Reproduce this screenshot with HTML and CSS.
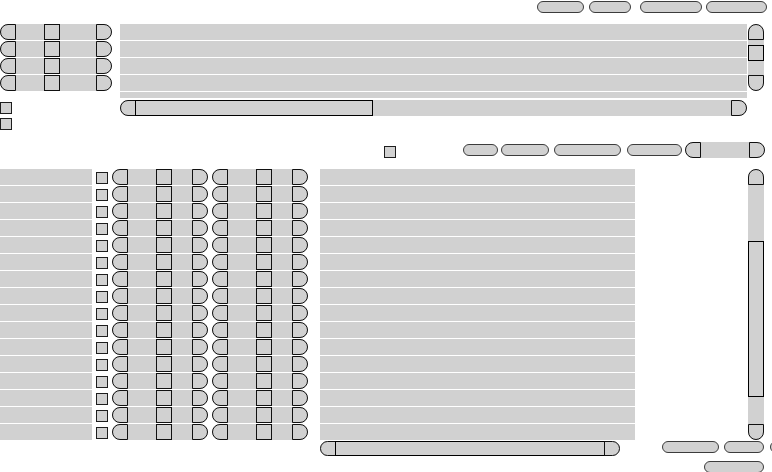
FILE: index.html
```html
<!DOCTYPE html>
<html lang="en">
<head>
  <meta charset="UTF-8" />
  <title>Widgets</title>
  <link rel="stylesheet" href="styles.css">
</head>
<body>

  <header class="topbar">
    <button class="pill w47"></button>
    <button class="pill w42 ml5"></button>
    <button class="pill w62 ml9"></button>
    <button class="pill w61 ml4"></button>
  </header>

  <section class="upper">
    <div class="side-left">
      <div class="spin"><span class="cap-l"></span><span class="sq"></span><span class="cap-r"></span></div>
      <div class="spin"><span class="cap-l"></span><span class="sq"></span><span class="cap-r"></span></div>
      <div class="spin"><span class="cap-l"></span><span class="sq"></span><span class="cap-r"></span></div>
      <div class="spin"><span class="cap-l"></span><span class="sq"></span><span class="cap-r"></span></div>
      <span class="check first"></span>
      <span class="check second"></span>
    </div>

    <div class="main">
      <div class="list wide">
        <div class="item"></div>
        <div class="item"></div>
        <div class="item"></div>
        <div class="item"></div>
        <div class="item"></div>
      </div>
      <div class="hscroll wide">
        <span class="arrow-l"></span>
        <span class="thumb-h big"></span>
        <span class="track"></span>
        <span class="arrow-r"></span>
      </div>
    </div>

    <div class="vscroll small">
      <span class="arrow-u"></span>
      <span class="thumb-v short"></span>
      <span class="arrow-d"></span>
    </div>
  </section>

  <div class="midbar">
    <span class="check mid"></span>
    <button class="pill w35 ml67 mt2"></button>
    <button class="pill w48 ml3 mt2"></button>
    <button class="pill w67 ml5 mt2"></button>
    <button class="pill w55 ml6 mt2"></button>
    <div class="hscroll slider">
      <span class="arrow-l"></span>
      <span class="track"></span>
      <span class="arrow-r"></span>
    </div>
  </div>

  <section class="lower">
    <div class="table">
      <div class="trow"><span class="cell"></span><span class="check"></span><span class="spin short"><span class="cap-l"></span><span class="sq"></span><span class="cap-r"></span></span><span class="spin short"><span class="cap-l"></span><span class="sq"></span><span class="cap-r"></span></span></div>
      <div class="trow"><span class="cell"></span><span class="check"></span><span class="spin short"><span class="cap-l"></span><span class="sq"></span><span class="cap-r"></span></span><span class="spin short"><span class="cap-l"></span><span class="sq"></span><span class="cap-r"></span></span></div>
      <div class="trow"><span class="cell"></span><span class="check"></span><span class="spin short"><span class="cap-l"></span><span class="sq"></span><span class="cap-r"></span></span><span class="spin short"><span class="cap-l"></span><span class="sq"></span><span class="cap-r"></span></span></div>
      <div class="trow"><span class="cell"></span><span class="check"></span><span class="spin short"><span class="cap-l"></span><span class="sq"></span><span class="cap-r"></span></span><span class="spin short"><span class="cap-l"></span><span class="sq"></span><span class="cap-r"></span></span></div>
      <div class="trow"><span class="cell"></span><span class="check"></span><span class="spin short"><span class="cap-l"></span><span class="sq"></span><span class="cap-r"></span></span><span class="spin short"><span class="cap-l"></span><span class="sq"></span><span class="cap-r"></span></span></div>
      <div class="trow"><span class="cell"></span><span class="check"></span><span class="spin short"><span class="cap-l"></span><span class="sq"></span><span class="cap-r"></span></span><span class="spin short"><span class="cap-l"></span><span class="sq"></span><span class="cap-r"></span></span></div>
      <div class="trow"><span class="cell"></span><span class="check"></span><span class="spin short"><span class="cap-l"></span><span class="sq"></span><span class="cap-r"></span></span><span class="spin short"><span class="cap-l"></span><span class="sq"></span><span class="cap-r"></span></span></div>
      <div class="trow"><span class="cell"></span><span class="check"></span><span class="spin short"><span class="cap-l"></span><span class="sq"></span><span class="cap-r"></span></span><span class="spin short"><span class="cap-l"></span><span class="sq"></span><span class="cap-r"></span></span></div>
      <div class="trow"><span class="cell"></span><span class="check"></span><span class="spin short"><span class="cap-l"></span><span class="sq"></span><span class="cap-r"></span></span><span class="spin short"><span class="cap-l"></span><span class="sq"></span><span class="cap-r"></span></span></div>
      <div class="trow"><span class="cell"></span><span class="check"></span><span class="spin short"><span class="cap-l"></span><span class="sq"></span><span class="cap-r"></span></span><span class="spin short"><span class="cap-l"></span><span class="sq"></span><span class="cap-r"></span></span></div>
      <div class="trow"><span class="cell"></span><span class="check"></span><span class="spin short"><span class="cap-l"></span><span class="sq"></span><span class="cap-r"></span></span><span class="spin short"><span class="cap-l"></span><span class="sq"></span><span class="cap-r"></span></span></div>
      <div class="trow"><span class="cell"></span><span class="check"></span><span class="spin short"><span class="cap-l"></span><span class="sq"></span><span class="cap-r"></span></span><span class="spin short"><span class="cap-l"></span><span class="sq"></span><span class="cap-r"></span></span></div>
      <div class="trow"><span class="cell"></span><span class="check"></span><span class="spin short"><span class="cap-l"></span><span class="sq"></span><span class="cap-r"></span></span><span class="spin short"><span class="cap-l"></span><span class="sq"></span><span class="cap-r"></span></span></div>
      <div class="trow"><span class="cell"></span><span class="check"></span><span class="spin short"><span class="cap-l"></span><span class="sq"></span><span class="cap-r"></span></span><span class="spin short"><span class="cap-l"></span><span class="sq"></span><span class="cap-r"></span></span></div>
      <div class="trow"><span class="cell"></span><span class="check"></span><span class="spin short"><span class="cap-l"></span><span class="sq"></span><span class="cap-r"></span></span><span class="spin short"><span class="cap-l"></span><span class="sq"></span><span class="cap-r"></span></span></div>
      <div class="trow"><span class="cell"></span><span class="check"></span><span class="spin short"><span class="cap-l"></span><span class="sq"></span><span class="cap-r"></span></span><span class="spin short"><span class="cap-l"></span><span class="sq"></span><span class="cap-r"></span></span></div>
    </div>

    <div class="list-col">
      <div class="list long">
        <div class="item"></div><div class="item"></div><div class="item"></div><div class="item"></div>
        <div class="item"></div><div class="item"></div><div class="item"></div><div class="item"></div>
        <div class="item"></div><div class="item"></div><div class="item"></div><div class="item"></div>
        <div class="item"></div><div class="item"></div><div class="item"></div><div class="item"></div>
      </div>
      <div class="hscroll narrow">
        <span class="arrow-l"></span>
        <span class="thumb-h long"></span>
        <span class="arrow-r"></span>
      </div>
    </div>

    <div class="side-right">
      <div class="vscroll tall">
        <span class="arrow-u"></span>
        <span class="thumb-v long"></span>
        <span class="arrow-d"></span>
      </div>
      <div class="btnrow">
        <button class="pill w57"></button>
        <button class="pill w40"></button>
        <button class="pill w40 edge"></button>
      </div>
      <div class="btnrow last">
        <button class="pill w60"></button>
      </div>
    </div>
  </section>

</body>
</html>
```

FILE: styles.css
```css
body {
  margin: 0;
  width: 772px;
  height: 472px;
  overflow: hidden;
  background: #fff;
  font-family: "Liberation Sans", Arial, sans-serif;
}

/* shared widget pieces */
.pill {
  display: block;
  flex: none;
  height: 12px;
  padding: 0;
  box-sizing: border-box;
  border: 1px solid #3c3c3c;
  border-radius: 6px;
  background: #d1d1d1;
}

.w35 { width: 35px; }
.w40 { width: 40px; }
.w42 { width: 42px; }
.w47 { width: 47px; }
.w48 { width: 48px; }
.w55 { width: 55px; }
.w57 { width: 57px; }
.w60 { width: 60px; }
.w61 { width: 61px; }
.w62 { width: 62px; }
.w67 { width: 67px; }
.ml3 { margin-left: 3px; }
.ml4 { margin-left: 4px; }
.ml5 { margin-left: 5px; }
.ml6 { margin-left: 6px; }
.ml9 { margin-left: 9px; }
.ml67 { margin-left: 67px; }
.mt2 { margin-top: 2px; }

.check {
  display: block;
  flex: none;
  width: 12px;
  height: 12px;
  box-sizing: border-box;
  border: 1px solid #1e1e1e;
  background: #d1d1d1;
}

.spin {
  display: flex;
  flex: none;
  width: 112px;
  height: 16px;
  margin-bottom: 1px;
  border-radius: 8px;
  background: #d1d1d1;
}

.cap-l, .cap-r, .sq {
  display: block;
  flex: none;
  width: 16px;
  height: 16px;
  box-sizing: border-box;
  border: 1px solid #111;
}

.cap-l { border-radius: 8px 0 0 8px; }
.cap-r { border-radius: 0 8px 8px 0; margin-left: auto; }
.sq { margin-left: 28px; }

.list {
  display: flex;
  flex-direction: column;
  gap: 1px;
  overflow: hidden;
  flex: none;
}

.item {
  flex: none;
  height: 16px;
  background: #d1d1d1;
}

/* scrollbars */
.hscroll {
  display: flex;
  flex: none;
  height: 16px;
  background: #d1d1d1;
  border-radius: 8px;
}

.arrow-l, .arrow-r, .arrow-u, .arrow-d {
  display: block;
  flex: none;
  width: 16px;
  height: 16px;
  box-sizing: border-box;
  border: 1px solid #111;
}

.arrow-l { border-radius: 8px 0 0 8px; }
.arrow-r { border-radius: 0 8px 8px 0; }
.arrow-u { border-radius: 8px 8px 0 0; }
.arrow-d { border-radius: 0 0 8px 8px; margin-top: auto; }

.track { flex: 1; }

.thumb-h, .thumb-v {
  display: block;
  flex: none;
  box-sizing: border-box;
  border: 1px solid #000;
}

.thumb-h { margin-left: -1px; }

.vscroll {
  display: flex;
  flex-direction: column;
  flex: none;
  width: 16px;
  background: #d1d1d1;
  border-radius: 8px;
}

/* top toolbar */
.topbar {
  display: flex;
  height: 24px;
  box-sizing: border-box;
  padding: 1px 0 0 537px;
}

/* upper panel */
.upper {
  display: flex;
  height: 118px;
}

.side-left {
  width: 120px;
  flex: none;
}

.side-left .check.first { margin-top: 11px; }
.side-left .check.second { margin-top: 4px; }

.main {
  width: 627px;
  flex: none;
}

.list.wide { width: 627px; height: 74px; }
.hscroll.wide { width: 627px; margin-top: 2px; }
.thumb-h.big { width: 238px; }

.vscroll.small {
  height: 67px;
  margin-left: 1px;
}

.thumb-v.short {
  height: 16px;
  margin-top: 5px;
}

/* middle toolbar */
.midbar {
  display: flex;
  align-items: flex-start;
  height: 16px;
  padding-left: 384px;
}

.check.mid { margin-top: 4px; }
.hscroll.slider { width: 80px; margin-left: 3px; }

/* lower panel */
.lower {
  display: flex;
  margin-top: 11px;
}

.table {
  display: flex;
  flex-direction: column;
  gap: 1px;
  width: 320px;
  flex: none;
}

.trow {
  display: flex;
  height: 16px;
}

.cell {
  display: block;
  width: 92px;
  flex: none;
  background: #d1d1d1;
}

.trow .check { margin: 3px 4px 0 4px; }
.spin.short { width: 96px; margin-bottom: 0; }
.spin.short + .spin.short { margin-left: 4px; }

.list-col {
  width: 315px;
  flex: none;
}

.list.long { width: 315px; height: 271px; }
.hscroll.narrow { width: 300px; height: 15px; margin-top: 1px; }
.hscroll.narrow .arrow-l,
.hscroll.narrow .arrow-r,
.hscroll.narrow .thumb-h { height: 15px; }
.thumb-h.long { width: 270px; }
.hscroll.narrow .arrow-r { margin-left: -1px; }

.side-right {
  display: flex;
  flex-direction: column;
  flex: none;
  width: 137px;
}

.vscroll.tall {
  height: 271px;
  margin-left: 113px;
}

.thumb-v.long {
  height: 156px;
  margin-top: 56px;
}

.btnrow {
  display: flex;
  gap: 5px;
  margin: 1px 0 0 27px;
}

.pill.edge { margin-left: 1px; }

.btnrow.last { margin: 8px 0 0 69px; }
```
